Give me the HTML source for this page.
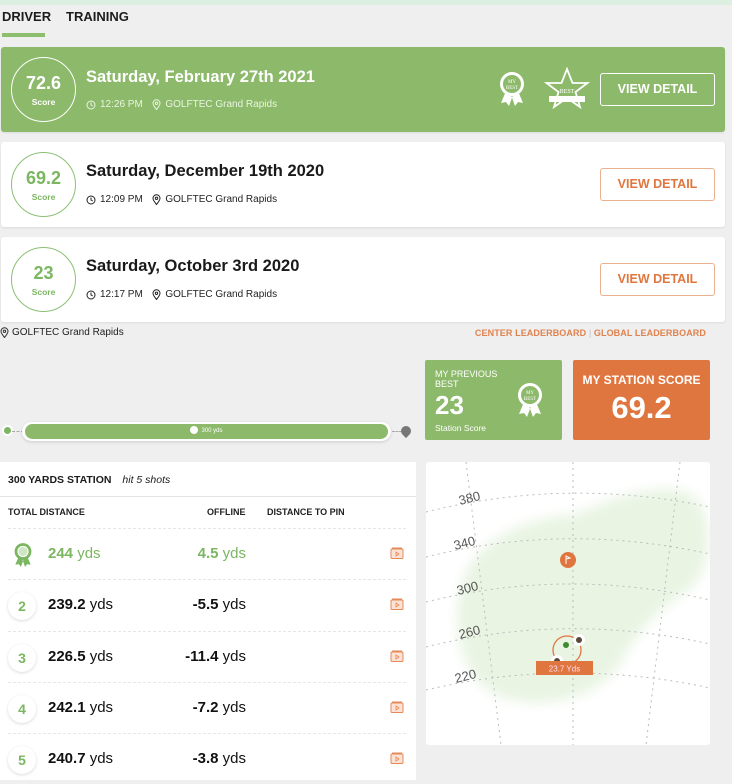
<!DOCTYPE html>
<html><head><meta charset="utf-8">
<style>
*{box-sizing:border-box;margin:0;padding:0}
body{width:732px;height:780px;overflow:hidden;background:#efefef;font-family:"Liberation Sans",sans-serif;position:relative;color:#1b1b1b}
.abs{position:absolute}
.strip{left:0;top:0;width:732px;height:5px;background:#dcefe0}
.tab{top:9px;font-size:13px;font-weight:bold;color:#1c1c1c}
.card{left:1px;width:724px;height:85px;background:#fff;border-radius:3px;box-shadow:0 1px 2px rgba(0,0,0,.08)}
.card.g{background:#8cb96a}
.circ{left:10px;top:10px;width:65px;height:65px;border:1.5px solid #8cc075;border-radius:50%;text-align:center;color:#7bb661}
.circ b{display:block;font-size:18px;margin-top:15px}
.circ span{display:block;font-size:8.5px;font-weight:bold;margin-top:3px}
.g .circ{border-color:#fff;color:#fff}
.title{left:85px;top:20px;font-size:16.5px;font-weight:bold;color:#1a1a1a}
.g .title{color:#fff}
.sub{left:85px;top:52px;font-size:10px;color:#222;display:flex;align-items:center;gap:4px}
.g .sub{color:#eaf5e2}
.btn{left:599px;top:26px;width:115px;height:33px;border:1.5px solid #eab08f;border-radius:3px;color:#e0763f;font-weight:bold;font-size:12.5px;text-align:center;line-height:30px}
.g .btn{border-color:#fff;color:#fff}
.row{left:8px;width:398px;height:51px;border-top:1px dashed #e6e6e6}
.num{left:0;top:12px;width:28px;height:28px;border-radius:50%;box-shadow:0 1px 3px rgba(0,0,0,.15);color:#7bb661;font-weight:bold;font-size:14px;text-align:center;line-height:28px;background:#fff}
.dist{left:40px;top:16px;font-size:15px;color:#111}
.dist b,.off b{font-weight:bold}
.off{right:160px;top:16px;font-size:15px;color:#111;text-align:right}
.vid{right:2px;top:18px}
</style></head><body>
<div class="abs strip"></div>
<div class="abs tab" style="left:2px">DRIVER</div>
<div class="abs tab" style="left:66px">TRAINING</div>
<div class="abs" style="left:2px;top:33px;width:43px;height:4px;background:#8cbe6e"></div>

<div class="abs card g" style="top:47px">
 <div class="abs circ"><b>72.6</b><span>Score</span></div>
 <div class="abs title" style="top:21px">Saturday, February 27th 2021</div>
 <div class="abs sub"><svg width="10" height="10" viewBox="0 0 10 10"><circle cx="5" cy="5" r="4" fill="none" stroke="currentColor"/><path d="M5 2.5V5l1.8 1" fill="none" stroke="currentColor"/></svg>12:26 PM &nbsp;<svg width="9" height="11" viewBox="0 0 9 11"><path d="M4.5 10.5C2 7.5 1 6 1 4.3a3.5 3.5 0 017 0C8 6 7 7.5 4.5 10.5z" fill="none" stroke="currentColor"/><circle cx="4.5" cy="4.3" r="1.2" fill="none" stroke="currentColor"/></svg>GOLFTEC Grand Rapids</div>
 <svg class="abs" style="left:496px;top:22px" width="30" height="40" viewBox="0 0 30 40"><path d="M9 22l-5 12 5-1 3 4 4-11zM21 22l5 12-5-1-3 4-4-11z" fill="#fff"/><circle cx="15" cy="15" r="12" fill="#fff"/><circle cx="15" cy="15" r="9" fill="#8cb96a"/><text x="15" y="14" font-size="5" fill="#fff" text-anchor="middle" font-family="Liberation Serif">MY</text><text x="15" y="20" font-size="5" fill="#fff" text-anchor="middle" font-family="Liberation Serif">BEST</text></svg>
 <svg class="abs" style="left:543px;top:20px" width="46" height="44" viewBox="0 0 46 44"><path d="M23 2l5.5 14h15l-12 9 4.5 15-13-9-13 9 4.5-15-12-9h15z" fill="none" stroke="#fff" stroke-width="1.8"/><text x="23" y="26" font-size="6" fill="#fff" text-anchor="middle" font-family="Liberation Serif">BEST</text><rect x="5" y="29" width="36" height="6" fill="#fff"/></svg>
 <div class="abs btn">VIEW DETAIL</div>
</div>

<div class="abs card" style="top:142px">
 <div class="abs circ"><b>69.2</b><span>Score</span></div>
 <div class="abs title">Saturday, December 19th 2020</div>
 <div class="abs sub"><svg width="10" height="10" viewBox="0 0 10 10"><circle cx="5" cy="5" r="4" fill="none" stroke="currentColor"/><path d="M5 2.5V5l1.8 1" fill="none" stroke="currentColor"/></svg>12:09 PM &nbsp;<svg width="9" height="11" viewBox="0 0 9 11"><path d="M4.5 10.5C2 7.5 1 6 1 4.3a3.5 3.5 0 017 0C8 6 7 7.5 4.5 10.5z" fill="none" stroke="currentColor"/><circle cx="4.5" cy="4.3" r="1.2" fill="none" stroke="currentColor"/></svg>GOLFTEC Grand Rapids</div>
 <div class="abs btn">VIEW DETAIL</div>
</div>

<div class="abs card" style="top:237px">
 <div class="abs circ"><b>23</b><span>Score</span></div>
 <div class="abs title">Saturday, October 3rd 2020</div>
 <div class="abs sub"><svg width="10" height="10" viewBox="0 0 10 10"><circle cx="5" cy="5" r="4" fill="none" stroke="currentColor"/><path d="M5 2.5V5l1.8 1" fill="none" stroke="currentColor"/></svg>12:17 PM &nbsp;<svg width="9" height="11" viewBox="0 0 9 11"><path d="M4.5 10.5C2 7.5 1 6 1 4.3a3.5 3.5 0 017 0C8 6 7 7.5 4.5 10.5z" fill="none" stroke="currentColor"/><circle cx="4.5" cy="4.3" r="1.2" fill="none" stroke="currentColor"/></svg>GOLFTEC Grand Rapids</div>
 <div class="abs btn">VIEW DETAIL</div>
</div>

<div class="abs" style="left:0;top:327px;font-size:10px;color:#222;display:flex;align-items:center;gap:3px"><svg width="9" height="11" viewBox="0 0 9 11"><path d="M4.5 10.5C2 7.5 1 6 1 4.3a3.5 3.5 0 017 0C8 6 7 7.5 4.5 10.5z" fill="none" stroke="#333"/><circle cx="4.5" cy="4.3" r="1.2" fill="none" stroke="#333"/></svg>GOLFTEC Grand Rapids</div>
<div class="abs" style="right:26px;top:328px;font-size:9px;font-weight:bold;color:#e0824e;letter-spacing:0.1px">CENTER LEADERBOARD <span style="color:#bbb;font-weight:normal">|</span> GLOBAL LEADERBOARD</div>

<div class="abs" style="left:425px;top:360px;width:137px;height:80px;background:#8cb96a;border-radius:2px;color:#fff">
 <div class="abs" style="left:10px;top:9px;font-size:9px;line-height:10px">MY PREVIOUS<br>BEST</div>
 <div class="abs" style="left:10px;top:30px;font-size:26px;font-weight:bold">23</div>
 <div class="abs" style="left:10px;top:63px;font-size:8.5px">Station Score</div>
 <svg class="abs" style="left:89px;top:20px" width="32" height="40" viewBox="0 0 30 40"><path d="M9 22l-5 12 5-1 3 4 4-11zM21 22l5 12-5-1-3 4-4-11z" fill="#fff"/><circle cx="15" cy="15" r="12" fill="#fff"/><circle cx="15" cy="15" r="9" fill="#8cb96a"/><text x="15" y="14" font-size="5" fill="#fff" text-anchor="middle" font-family="Liberation Serif">MY</text><text x="15" y="20" font-size="5" fill="#fff" text-anchor="middle" font-family="Liberation Serif">BEST</text></svg>
</div>
<div class="abs" style="left:573px;top:360px;width:137px;height:80px;background:#e0763f;border-radius:2px;color:#fff;text-align:center">
 <div style="margin-top:13px;font-size:12px;font-weight:bold">MY STATION SCORE</div>
 <div style="margin-top:3px;font-size:31px;font-weight:bold">69.2</div>
</div>

<div class="abs" style="left:4px;top:427px;width:7px;height:7px;border-radius:50%;background:#7bb661;box-shadow:0 0 0 2px #fff"></div>
<div class="abs" style="left:12px;top:431px;width:12px;border-top:1px dashed #aaa"></div>
<div class="abs" style="left:22px;top:422px;width:369px;height:19px;border-radius:10px;background:#fff;box-shadow:0 1px 3px rgba(0,0,0,.15)"></div>
<div class="abs" style="left:25px;top:424px;width:363px;height:15px;border-radius:8px;background:#8cb96a;color:#fff;font-size:6px;text-align:center;line-height:15px"><span style="display:inline-block;width:8px;height:8px;border-radius:50%;background:#fff;vertical-align:middle;margin-right:3px"></span>300 yds</div>
<div class="abs" style="left:392px;top:431px;width:10px;border-top:1px dashed #aaa"></div>
<div class="abs" style="left:401px;top:426px;width:10px;height:10px;border-radius:50% 50% 50% 0;transform:rotate(-45deg);background:#777"></div>

<div class="abs" style="left:0;top:462px;width:416px;height:318px;background:#fff">
 <div class="abs" style="left:8px;top:12px;font-size:10.5px;font-weight:bold">300 YARDS STATION <i style="font-weight:normal;margin-left:8px">hit 5 shots</i></div>
 <div class="abs" style="left:0;top:34px;width:416px;border-top:1px solid #e4e4e4"></div>
 <div class="abs" style="left:8px;top:45px;font-size:9px;font-weight:bold;color:#222">TOTAL DISTANCE</div>
 <div class="abs" style="left:207px;top:45px;font-size:9px;font-weight:bold;color:#222">OFFLINE</div>
 <div class="abs" style="left:267px;top:45px;font-size:9px;font-weight:bold;color:#222">DISTANCE TO PIN</div>

 <div class="abs row" style="top:66px">
  <svg class="abs" style="left:4px;top:12px" width="22" height="28" viewBox="0 0 30 40"><path d="M9 22l-5 12 5-1 3 4 4-11zM21 22l5 12-5-1-3 4-4-11z" fill="#7bb661"/><circle cx="15" cy="15" r="12" fill="#7bb661"/><circle cx="15" cy="15" r="8" fill="#fff"/><circle cx="15" cy="15" r="6.5" fill="#cfe6c3"/></svg>
  <div class="abs dist" style="color:#7bb661"><b>244</b> yds</div>
  <div class="abs off" style="color:#7bb661"><b>4.5</b> yds</div>
  <svg class="abs vid" width="14" height="12" viewBox="0 0 14 12"><rect x="1" y="2" width="12" height="9.5" rx="1" fill="#fbe2d4" stroke="#e48a58"/><path d="M2 1h10" stroke="#e48a58"/><path d="M6 5v4l3-2z" fill="none" stroke="#e48a58" stroke-width=".8"/></svg>
 </div>
 <div class="abs row" style="top:117px"><div class="abs num">2</div><div class="abs dist"><b>239.2</b> yds</div><div class="abs off"><b>-5.5</b> yds</div><svg class="abs vid" width="14" height="12" viewBox="0 0 14 12"><rect x="1" y="2" width="12" height="9.5" rx="1" fill="#fbe2d4" stroke="#e48a58"/><path d="M2 1h10" stroke="#e48a58"/><path d="M6 5v4l3-2z" fill="none" stroke="#e48a58" stroke-width=".8"/></svg></div>
 <div class="abs row" style="top:169px"><div class="abs num">3</div><div class="abs dist"><b>226.5</b> yds</div><div class="abs off"><b>-11.4</b> yds</div><svg class="abs vid" width="14" height="12" viewBox="0 0 14 12"><rect x="1" y="2" width="12" height="9.5" rx="1" fill="#fbe2d4" stroke="#e48a58"/><path d="M2 1h10" stroke="#e48a58"/><path d="M6 5v4l3-2z" fill="none" stroke="#e48a58" stroke-width=".8"/></svg></div>
 <div class="abs row" style="top:220px"><div class="abs num">4</div><div class="abs dist"><b>242.1</b> yds</div><div class="abs off"><b>-7.2</b> yds</div><svg class="abs vid" width="14" height="12" viewBox="0 0 14 12"><rect x="1" y="2" width="12" height="9.5" rx="1" fill="#fbe2d4" stroke="#e48a58"/><path d="M2 1h10" stroke="#e48a58"/><path d="M6 5v4l3-2z" fill="none" stroke="#e48a58" stroke-width=".8"/></svg></div>
 <div class="abs row" style="top:271px"><div class="abs num">5</div><div class="abs dist"><b>240.7</b> yds</div><div class="abs off"><b>-3.8</b> yds</div><svg class="abs vid" width="14" height="12" viewBox="0 0 14 12"><rect x="1" y="2" width="12" height="9.5" rx="1" fill="#fbe2d4" stroke="#e48a58"/><path d="M2 1h10" stroke="#e48a58"/><path d="M6 5v4l3-2z" fill="none" stroke="#e48a58" stroke-width=".8"/></svg></div>
</div>

<div class="abs" style="left:426px;top:462px;width:284px;height:283px;background:#fff;border-radius:3px;overflow:hidden">
<svg width="284" height="283" viewBox="0 0 284 283">
 <defs><filter id="bl"><feGaussianBlur stdDeviation="6"/></filter></defs>
 <path d="M40 110 C60 70 110 55 150 52 C180 40 220 20 260 30 C290 40 290 110 260 130 C230 150 215 165 195 200 C175 235 120 250 75 235 C35 220 20 160 40 110Z" fill="#e9f4e3" filter="url(#bl)"/>
 <g fill="none" stroke="#bbb" stroke-dasharray="2 4" stroke-width="1">
  <path d="M0 50 Q140 15 284 45"/><path d="M0 95 Q140 60 284 92"/><path d="M0 140 Q140 105 284 138"/><path d="M0 185 Q140 150 284 182"/><path d="M0 228 Q140 195 284 226"/>
  <path d="M40 0 L75 283"/><path d="M147 0 V283"/><path d="M254 0 L220 283"/>
 </g>
 <g font-size="13" fill="#555" font-family="Liberation Sans">
  <text x="34" y="43" transform="rotate(-14 34 43)">380</text>
  <text x="29" y="88" transform="rotate(-14 29 88)">340</text>
  <text x="32" y="133" transform="rotate(-14 32 133)">300</text>
  <text x="34" y="177" transform="rotate(-14 34 177)">260</text>
  <text x="30" y="221" transform="rotate(-14 30 221)">220</text>
 </g>
 <circle cx="142" cy="98" r="8" fill="#e0763f"/>
 <path d="M140 102v-8l4 2-4 1" stroke="#fff" fill="none" stroke-width="1"/>
 <circle cx="141" cy="188" r="14" fill="none" stroke="#e0763f" stroke-width="1.3"/>
 <circle cx="153" cy="178" r="6" fill="#fff"/><circle cx="153" cy="178" r="3" fill="#5a4a3e"/>
 <circle cx="131" cy="199" r="6" fill="#fff"/><circle cx="131" cy="199" r="3" fill="#5a4a3e"/>
 <circle cx="140" cy="183" r="3" fill="#3d8b2e"/>
 <rect x="110" y="199" width="57" height="14" fill="#e0763f"/>
 <text x="138.5" y="209.5" font-size="8" fill="#fde" text-anchor="middle" font-family="Liberation Sans">23.7 Yds</text>
</svg>
</div>
</body></html>
